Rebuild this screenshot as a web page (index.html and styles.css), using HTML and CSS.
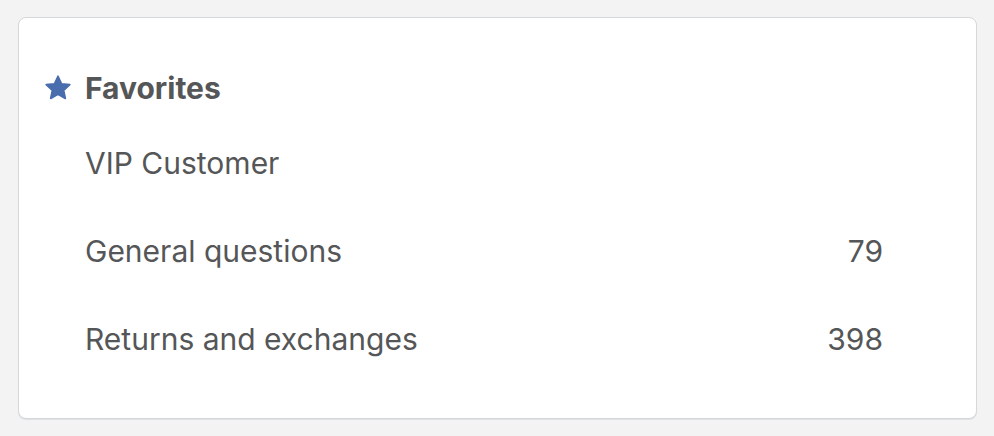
FILE: index.html
```html
<!DOCTYPE html>
<html>
<head>
<meta charset="utf-8">
<link rel="stylesheet" href="styles.css">
</head>
<body>
<div class="card">
  <div class="heading">
    <svg class="star" viewBox="0 0 24 24" width="30" height="30">
      <path d="M12 2.6l2.8 6 6.6.75-4.9 4.5 1.35 6.5L12 17.05l-5.85 3.3 1.35-6.5-4.9-4.5 6.6-.75z" fill="#4a6dad" stroke="#4a6dad" stroke-width="1.4" stroke-linejoin="round"/>
    </svg>
    <span class="title">Favorites</span>
  </div>
  <ul class="list">
    <li class="row"><span class="label">VIP Customer</span><span class="count"></span></li>
    <li class="row"><span class="label">General questions</span><span class="count">79</span></li>
    <li class="row"><span class="label">Returns and exchanges</span><span class="count">398</span></li>
  </ul>
</div>
</body>
</html>
```
FILE: styles.css
```css
html, body {
  margin: 0;
  padding: 0;
}
body {
  background: #f2f3f2;
  padding: 17px 17px 15px 18px;
  font-family: Inter, "Liberation Sans", sans-serif;
  color: #555657;
}
.card {
  background: #fff;
  border: 1px solid #d5d8da;
  border-radius: 8px;
  box-shadow: 0 1px 0 #dfe2e3;
  padding: 50px 93px 37px 24px;
  height: 402px;
  box-sizing: border-box;
}
.heading {
  display: flex;
  align-items: center;
  height: 40px;
}
.star {
  display: block;
  margin-right: 12px;
}
.title {
  font-weight: 700;
  font-size: 30px;
  line-height: 40px;
}
.list {
  list-style: none;
  margin: 11px 0 0 0;
  padding: 0 0 0 42px;
}
.row {
  display: flex;
  justify-content: space-between;
  align-items: center;
  height: 88px;
  font-size: 30px;
}
```
